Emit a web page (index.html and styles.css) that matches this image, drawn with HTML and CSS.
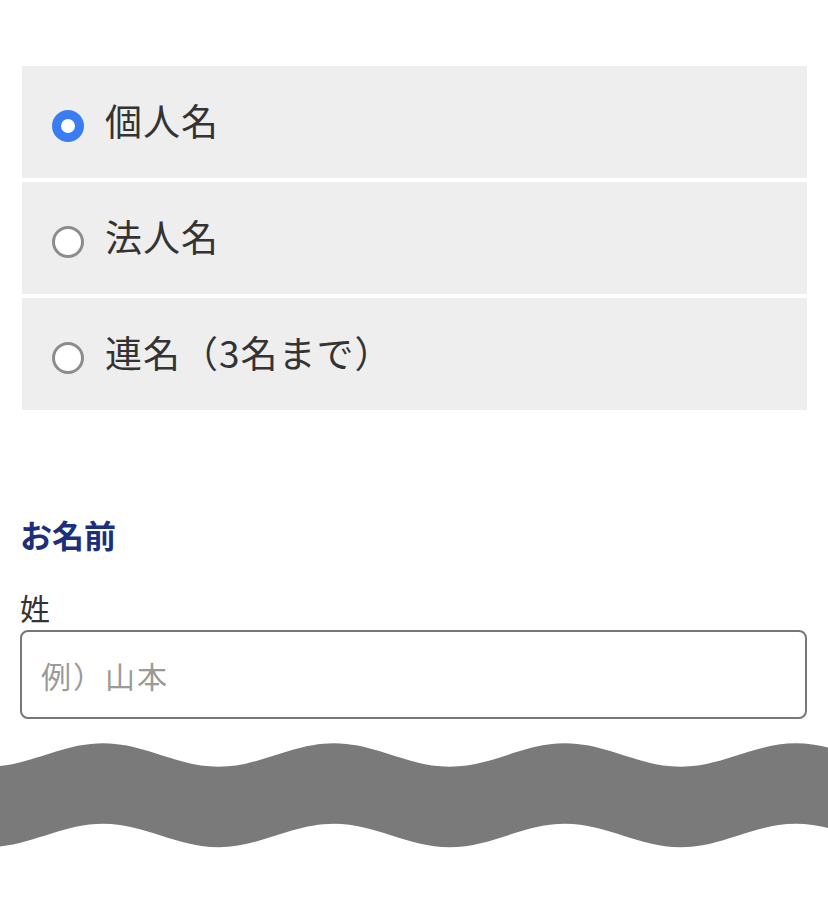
FILE: index.html
```html
<!DOCTYPE html>
<html lang="ja">
<head>
<meta charset="utf-8">
<title>お名前</title>
<link rel="stylesheet" href="styles.css">
</head>
<body>
<div class="page">
  <div class="options">
    <label class="option"><span class="radio checked"></span><span class="opt-text">個人名</span></label>
    <label class="option"><span class="radio"></span><span class="opt-text">法人名</span></label>
    <label class="option"><span class="radio"></span><span class="opt-text">連名（3名まで）</span></label>
  </div>
  <h2 class="heading">お名前</h2>
  <div class="field-label">姓</div>
  <div class="input"><span class="placeholder">例）山本</span></div>
</div>
<svg class="wave" viewBox="0 0 828 110" width="828" height="110" preserveAspectRatio="none">
  <path fill="#7a7a7a" d="M-12.5 26.7 C29.5 26.7 61 3.3 103 3.3 C145 3.3 176.5 26.7 218.5 26.7 C260.5 26.7 292 3.3 334 3.3 C376 3.3 407.5 26.7 449.5 26.7 C491.5 26.7 523 3.3 565 3.3 C607 3.3 638.5 26.7 680.5 26.7 C722.5 26.7 754 3.3 796 3.3 C838 3.3 869.5 26.7 911.5 26.7 L911.5 107.2 C869.5 107.2 838 83.8 796 83.8 C754 83.8 722.5 107.2 680.5 107.2 C638.5 107.2 607 83.8 565 83.8 C523 83.8 491.5 107.2 449.5 107.2 C407.5 107.2 376 83.8 334 83.8 C292 83.8 260.5 107.2 218.5 107.2 C176.5 107.2 145 83.8 103 83.8 C61 83.8 29.5 107.2 -12.5 107.2 Z"/>
</svg>
</body>
</html>
```

FILE: styles.css
```css
html, body {
  margin: 0;
  padding: 0;
  background: #ffffff;
}
body {
  font-family: "Noto Sans CJK JP", "Noto Sans", sans-serif;
  color: #333333;
}
.page {
  padding: 66px 21px 0 20px;
}
.options {
  display: flex;
  flex-direction: column;
  gap: 4px;
  margin: 0 0 0 2px;
}
.option {
  display: flex;
  align-items: center;
  height: 112px;
  background: #eeeeee;
  padding-left: 30px;
  box-sizing: border-box;
}
.radio {
  width: 32px;
  height: 32px;
  box-sizing: border-box;
  border-radius: 50%;
  border: 3px solid #8c8c8c;
  background: #ffffff;
  flex: none;
  margin-top: 8px;
}
.radio.checked {
  border: 9.5px solid #3a7df2;
}
.opt-text {
  margin-left: 21px;
  margin-bottom: 4px;
  font-size: 37px;
  line-height: 48px;
  color: #333333;
  letter-spacing: 1px;
}
.heading {
  margin: 100px 0 0 0;
  font-size: 32px;
  line-height: 48px;
  font-weight: 700;
  color: #1b2f7c;
}
.field-label {
  margin-top: 29px;
  font-size: 30px;
  line-height: 40px;
  color: #333333;
}
.input {
  margin-top: 3px;
  height: 89px;
  box-sizing: border-box;
  border: 2px solid #777777;
  border-radius: 8px;
  background: #ffffff;
  display: flex;
  align-items: center;
  padding-left: 19px;
}
.placeholder {
  font-size: 30px;
  line-height: 40px;
  color: #9a9a9a;
  letter-spacing: 2px;
}
.wave {
  display: block;
  margin-top: 21px;
  width: 828px;
  height: 110px;
}
```
